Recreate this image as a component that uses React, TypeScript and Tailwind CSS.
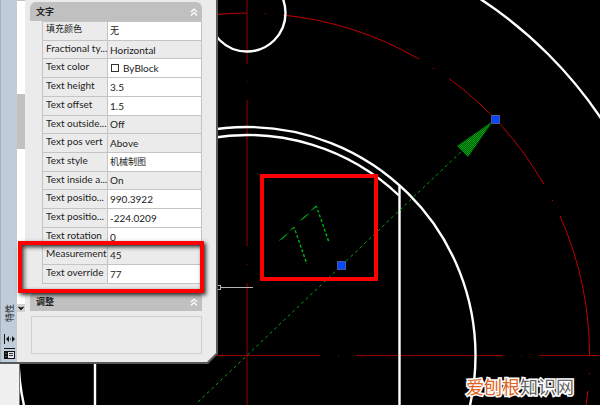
import { useState } from "react";
import clsx from "clsx";

type Row = {
  id: string;
  label: string;
  value: string;
  locked?: boolean;
  swatch?: boolean;
  cjkLabel?: boolean;
  cjkValue?: boolean;
};

const rows: Row[] = [
  { id: "fill", label: "填充颜色", value: "无", cjkLabel: true, cjkValue: true },
  { id: "fractional", label: "Fractional ty...", value: "Horizontal", locked: true },
  { id: "color", label: "Text color", value: "ByBlock", swatch: true },
  { id: "height", label: "Text height", value: "3.5" },
  { id: "offset", label: "Text offset", value: "1.5" },
  { id: "outside", label: "Text outside...", value: "Off", locked: true },
  { id: "pos-vert", label: "Text pos vert", value: "Above", locked: true },
  { id: "style", label: "Text style", value: "机械制图", cjkValue: true },
  { id: "inside", label: "Text inside a...", value: "On", locked: true },
  { id: "pos-x", label: "Text positio...", value: "990.3922" },
  { id: "pos-y", label: "Text positio...", value: "-224.0209" },
  { id: "rotation", label: "Text rotation", value: "0" },
  { id: "measurement", label: "Measurement", value: "45", locked: true },
  { id: "override", label: "Text override", value: "77" },
];

function SectionHeader({ title, open, onToggle }: { title: string; open: boolean; onToggle: () => void }) {
  return (
    <button
      type="button"
      aria-expanded={open}
      onClick={onToggle}
      className="flex w-full items-center justify-between rounded-t-md bg-[#c0c0c0] pl-1.5 pr-1 text-[9px] font-bold text-[#222]"
    >
      <span className="leading-[19px]">{title}</span>
      <svg className={clsx("h-2 w-2", !open && "rotate-180")} viewBox="0 0 8 8">
        <path d="M1 4L4 1L7 4M1 7.5L4 4.5L7 7.5" fill="none" stroke="#fff" strokeWidth="1.2" />
      </svg>
    </button>
  );
}

function PropertyRow({ row }: { row: Row }) {
  return (
    <tr>
      <th
        scope="row"
        className={clsx(
          "w-[65px] border border-[#c4c4c4] bg-[#ebebeb] p-0 pl-[3px] text-left align-top font-normal whitespace-nowrap",
          row.cjkLabel ? "text-[9px]" : "text-[10px]"
        )}
      >
        <label htmlFor={row.id} className="block leading-[14px]">
          {row.label}
        </label>
      </th>
      <td
        className={clsx(
          "border border-[#c4c4c4] p-0 pl-0.5",
          row.locked ? "bg-[#ebebeb]" : "bg-white",
          row.cjkValue ? "text-[9px]" : "text-[10px]"
        )}
      >
        <div className="flex items-center gap-1">
          {row.swatch && <span className="ml-px h-2 w-2 shrink-0 border border-[#333] bg-white" />}
          <input
            id={row.id}
            defaultValue={row.value}
            readOnly={row.locked}
            className="h-4 w-full min-w-0 bg-transparent leading-4 outline-none"
          />
        </div>
      </td>
    </tr>
  );
}

function PropertiesPalette() {
  const [textOpen, setTextOpen] = useState(true);
  const [fitOpen, setFitOpen] = useState(true);

  return (
    <aside className="relative w-[218px] bg-[#55595a] pr-0.5 pb-0.5 [clip-path:polygon(0_0,100%_0,100%_calc(100%-10px),calc(100%-10px)_100%,0_100%)]">
      <div className="flex bg-[#ebebeb] [clip-path:polygon(0_0,100%_0,100%_calc(100%-9px),calc(100%-9px)_100%,0_100%)]">
        {/* Title strip */}
        <div className="flex w-[17px] flex-col items-center justify-end gap-3 border-l border-[#a9b0b6] bg-[#bfccd9] pb-[3px]">
          <h1 className="rotate-180 text-[9px] leading-[11px] [text-orientation:sideways] [writing-mode:vertical-rl]">特性</h1>
          <button type="button" aria-label="Auto-hide">
            <svg className="block h-[10px] w-[11px]" viewBox="0 0 11 10">
              <path d="M0.5 0V10" stroke="#111" />
              <path d="M2 5L5 2V8ZM11 5L8 2V8Z" fill="#111" />
              <path d="M6.5 4V6" stroke="#666" />
            </svg>
          </button>
          <button type="button" aria-label="Properties" className="-mt-2">
            <svg className="block h-[11px] w-[11px]" viewBox="0 0 11 11">
              <path d="M0 0.5H11" stroke="#111" />
              <path d="M0 3H11V11H0Z" fill="#111" />
              <path d="M4 4H10V10H4Z" fill="#dfe5ea" />
              <path d="M5 5.5H9M5 7.5H9" stroke="#333" />
              <path d="M1 5.5H3M1 8.5H3" stroke="#555" />
            </svg>
          </button>
        </div>

        {/* Scrollbar */}
        <div className="mb-[50px] flex w-2 flex-col bg-white">
          <div className="h-px bg-[#c1c1c1]" />
          <div className="mt-[93px] h-[55px] bg-[#c1c1c1]" />
          <button type="button" aria-label="Scroll down" className="mt-auto flex h-2 items-center justify-center bg-[#d2d2d2]">
            <svg className="h-[5px] w-[6px]" viewBox="0 0 6 5">
              <path d="M0.5 1L3 4L5.5 1L3 2Z" fill="#222" stroke="#222" />
            </svg>
          </button>
        </div>

        <div className="min-w-0 flex-1 pt-0.5 pr-[14px] pb-2 pl-[5px]">
          <SectionHeader title="文字" open={textOpen} onToggle={() => setTextOpen(!textOpen)} />
          {textOpen && (
            <div className="pl-3">
              <table className="h-[263px] w-full table-fixed border-collapse">
                <tbody>
                  {rows.map((row) => (
                    <PropertyRow key={row.id} row={row} />
                  ))}
                </tbody>
              </table>
            </div>
          )}
          <div className="mt-2">
            <SectionHeader title="调整" open={fitOpen} onToggle={() => setFitOpen(!fitOpen)} />
          </div>
          {fitOpen && <div className="mt-[5px] ml-px h-[38px] border border-[#d0d0d0]" />}
        </div>
      </div>
    </aside>
  );
}

// Drawing centre is (247, 355.5); all the arcs share it.
function Drawing() {
  return (
    <svg
      className="absolute inset-0 h-full w-full"
      viewBox="0 0 600 405"
      preserveAspectRatio="xMinYMin slice"
      aria-label="CAD drawing"
    >
      <defs>
        <pattern id="hatch" width="2" height="2" patternUnits="userSpaceOnUse">
          <rect width="2" height="2" fill="#005800" />
          <rect width="1" height="1" fill="#00a614" />
          <rect x="1" y="1" width="1" height="1" fill="#00a614" />
        </pattern>
        <pattern id="dash" width="5" height="5" patternUnits="userSpaceOnUse" patternTransform="rotate(20)">
          <rect width="5" height="3" fill="#00b414" />
        </pattern>
      </defs>

      <g fill="none" stroke="#960000">
        <path d="M247 0V64M247 81V82M247 100V246M247 264V265M247 283V405" />
        <path d="M217 355.5H320M338 355.5H339M356 355.5H503M521 355.5H522M539 355.5H600" />
      </g>
      <g fill="none" stroke="#c00000">
        <path d="M217 14.5A342.5 342.5 0 0 1 247 13M265 13.5H266M283 15A342.5 342.5 0 0 1 419 59" />
        <path d="M433 68.5H434M449 78.5A342.5 342.5 0 0 1 544 184.5M552 200.5H553" />
        <path d="M560 216A342.5 342.5 0 0 1 589.5 355.5M589.5 373V374M588 391L586 405" />
      </g>

      <g fill="none" stroke="#fff" strokeWidth="2.4">
        <circle cx="247" cy="13" r="38.5" />
        <circle cx="247" cy="355.5" r="228.5" />
        <circle cx="247" cy="355.5" r="426" />
        <path d="M211 138A220.5 220.5 0 0 1 399 195.5" />
        <path d="M399.5 186V405M95 360V405" />
      </g>

      <path d="M198 402L464 149" fill="none" stroke="#00a814" strokeDasharray="3 3.2" />
      <path d="M493 121L457 146L468 157Z" fill="url(#hatch)" />

      <text
        transform="translate(300 272) rotate(-43.6)"
        className="font-['Open_Sans'] text-[54px]"
        fill="url(#dash)"
        stroke="#000"
        strokeWidth="2.8"
      >
        77
      </text>

      <g fill="#0846ff" stroke="#4a5a8c">
        <rect x="491.5" y="115.5" width="8" height="8" />
        <rect x="337.5" y="261.5" width="8" height="8" />
      </g>

      <g fill="none" stroke="#b4b4b4">
        <path d="M217.5 252V324M221 287.5H253" />
        <rect x="217.5" y="285.5" width="3" height="4" />
      </g>
    </svg>
  );
}

export default function App() {
  return (
    <main className="relative flex min-h-screen flex-col items-start overflow-hidden bg-black font-[Lato,'Noto_Sans_CJK_SC',sans-serif] text-[#222]">
      <Drawing />
      <div className="relative z-10">
        <PropertiesPalette />
        <div className="absolute top-[241px] left-[18px] h-[52px] w-[186px] border-4 border-[#ff0000] shadow-[2px_2px_4px_rgba(0,0,0,0.8),inset_2px_2px_4px_rgba(0,0,0,0.8)]" />
      </div>
      <div className="relative w-5 flex-1 border-r border-[#777] bg-[#f0f0f0]" />
      <div className="absolute top-[174px] left-[260px] h-[107px] w-[118px] border-4 border-[#ff0000]" />
      <p className="absolute right-[26px] bottom-[7px] text-[18px] leading-[22px] text-[#666] [-webkit-text-stroke:3px_white] [paint-order:stroke_fill]">
        <span className="text-[#e0641e]">爱刨根</span>知识网
      </p>
    </main>
  );
}
